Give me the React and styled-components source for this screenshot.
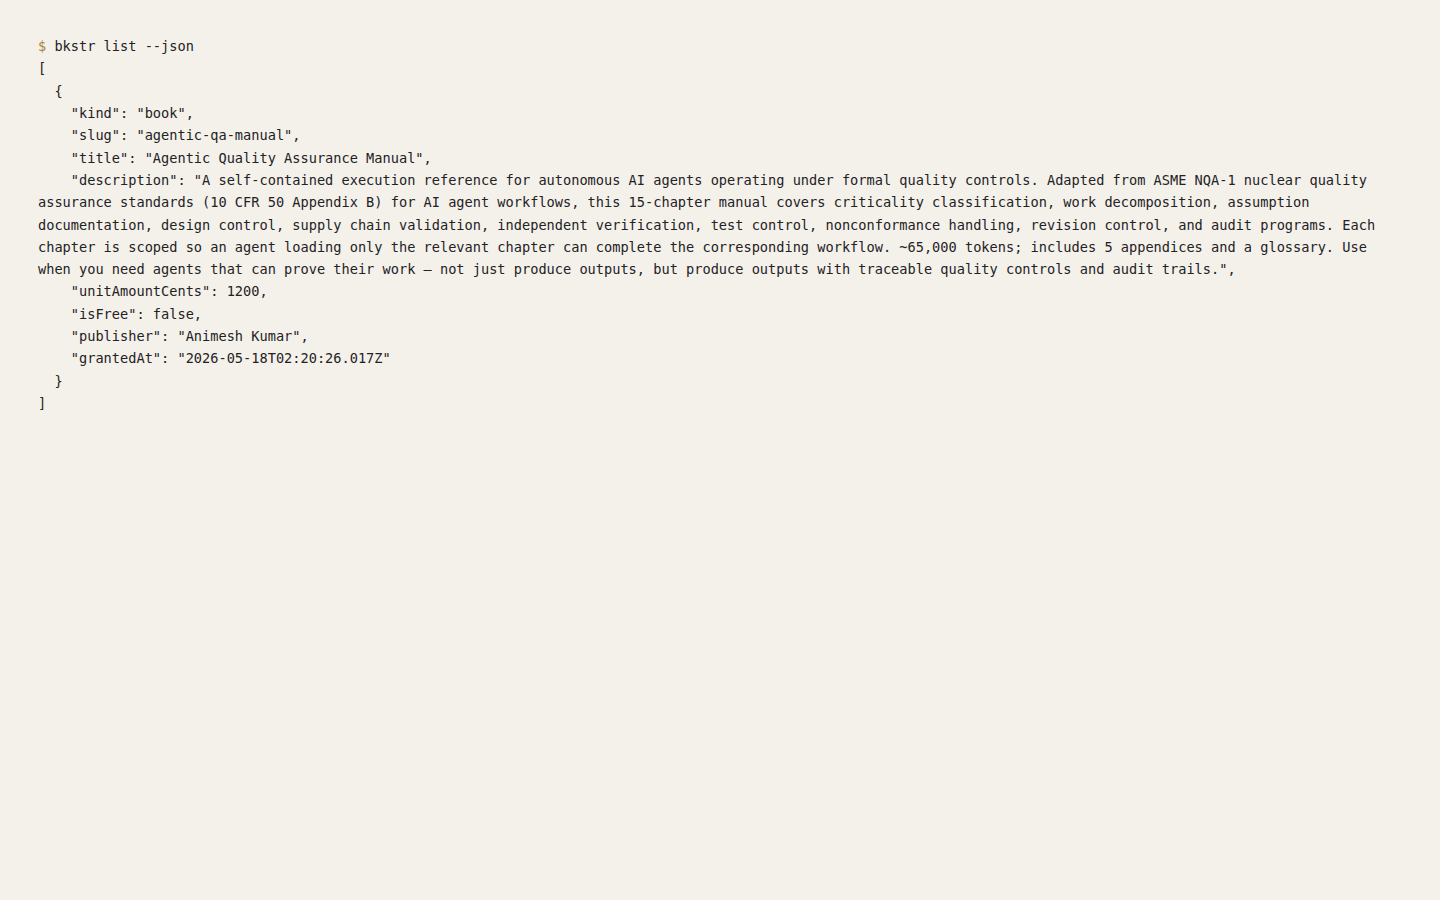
import React from "react";
import styled, { createGlobalStyle } from "styled-components";

const GlobalStyle = createGlobalStyle`
  html, body {
    margin: 0;
    padding: 0;
    background: #f4f1eb;
  }
`;

const Terminal = styled.div`
  min-height: 100vh;
  box-sizing: border-box;
  padding: 35px 38px;
  background: #f4f1eb;
  color: #23221f;
  font-family: "DejaVu Sans Mono", "Liberation Mono", monospace;
  font-size: 13.64px;
  line-height: 22.32px;
`;

const Output = styled.pre`
  margin: 0;
  font: inherit;
  white-space: pre-wrap;
  word-break: normal;
  overflow-wrap: normal;
`;

const Prompt = styled.span`
  color: #a8853a;
`;

const item = {
  kind: "book",
  slug: "agentic-qa-manual",
  title: "Agentic Quality Assurance Manual",
  description:
    "A self-contained execution reference for autonomous AI agents operating under formal quality controls. Adapted from ASME NQA-1 nuclear quality assurance standards (10 CFR 50 Appendix B) for AI agent workflows, this 15-chapter manual covers criticality classification, work decomposition, assumption documentation, design control, supply chain validation, independent verification, test control, nonconformance handling, revision control, and audit programs. Each chapter is scoped so an agent loading only the relevant chapter can complete the corresponding workflow. ~65,000 tokens; includes 5 appendices and a glossary. Use when you need agents that can prove their work \u2014 not just produce outputs, but produce outputs with traceable quality controls and audit trails.",
  unitAmountCents: 1200,
  isFree: false,
  publisher: "Animesh Kumar",
  grantedAt: "2026-05-18T02:20:26.017Z",
};

const App = () => {
  return (
    <>
      <GlobalStyle />
      <Terminal>
        <Output>
          <Prompt>$</Prompt> bkstr list --json{"\n"}
          {JSON.stringify([item], null, 2)}
        </Output>
      </Terminal>
    </>
  );
};

export default App;
